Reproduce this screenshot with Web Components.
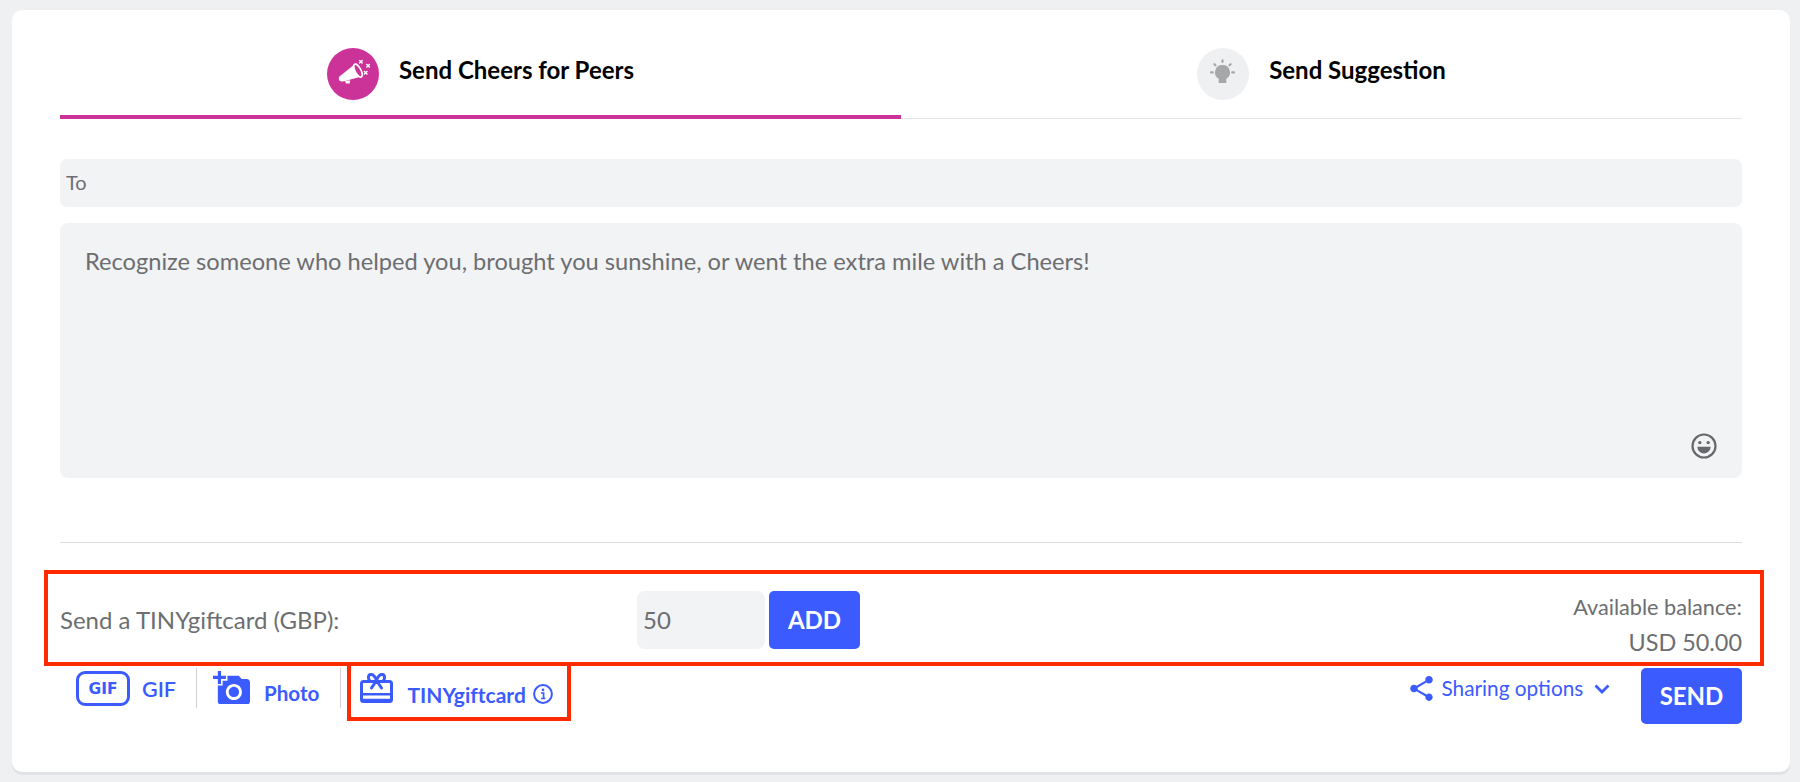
<!DOCTYPE html>
<html><head><meta charset="utf-8"><title>Cheers</title>
<style>
html,body{margin:0;padding:0;height:100%}
body{background:#eff0f2;font-family:Lato,"Liberation Sans",sans-serif;overflow:hidden;font-variant-ligatures:none}
</style></head>
<body>
<cheers-card>
  <cheers-tabs>
    <cheers-tab active label="Send Cheers for Peers">
      <svg slot="icon" width="52" height="52" viewBox="0 0 52 52">
        <g fill="#fff"><path d="M12.4 28.6 27.500 16.500 34.500 28.500 17 33.300q-3.800.6-5-1.400-.6-1.900.4-3.300Z"/>
        <path d="M18 32.500h5.200l-.6 3h-3.800Z"/></g>
        <ellipse cx="31" cy="22.600" rx="2.900" ry="7.200" transform="rotate(-28 31 22.600)" fill="#cc3399" stroke="#fff" stroke-width="1.600"/>
        <g stroke="#fff" stroke-width="1.400" stroke-linecap="round"><path d="M32.600 12.400l2.600 2.600M35.200 12.400l-2.600 2.600M39.800 16.400l2.600 2.600M42.400 16.400l-2.600 2.600M37.400 23.400l2.600 2.600M40 23.400l-2.600 2.600"/></g>
      </svg>
    </cheers-tab>
    <cheers-tab label="Send Suggestion">
      <svg slot="icon" width="52" height="52" viewBox="0 0 52 52">
        <path fill="#a6a7a9" d="M25.500 17a7.400 7.400 0 0 0-3.800 13.800V35h7.600v-4.200A7.400 7.400 0 0 0 25.500 17Z"/>
        <g stroke="#a6a7a9" stroke-width="2.200" stroke-linecap="round"><path d="M25.500 12.400v1.600M14 24.400h1.800M35.200 24.400H37M17.400 16.200l1.100 1.100M33.600 16.200l-1.100 1.100"/></g>
      </svg>
    </cheers-tab>
  </cheers-tabs>
  <cheers-to>To</cheers-to>
  <cheers-message placeholder="Recognize someone who helped you, brought you sunshine, or went the extra mile with a Cheers!"></cheers-message>
  <cheers-gift-row></cheers-gift-row>
  <cheers-toolbar></cheers-toolbar>
</cheers-card>
<script>
const def=(name,css,html)=>{
  customElements.define(name,class extends HTMLElement{
    connectedCallback(){
      if(this.shadowRoot)return;
      const r=this.attachShadow({mode:'open'});
      r.innerHTML='<style>'+css+'</style>'+(typeof html==='function'?html(this):html);
    }
  });
};
const BLUE='#3b5bff',GREY='#6c6e71',FIELD='#f2f3f5';

def('cheers-card',`:host{display:flex;flex-direction:column;box-sizing:border-box;margin:10px 10px 0 12px;height:762px;background:#fff;border-radius:10px;padding:38px 48px 0 48px;box-shadow:0 3px 0 #e1e2e5}`,`<slot></slot>`);

def('cheers-tabs',`:host{display:flex;height:71px;box-sizing:border-box}`,`<slot></slot>`);

def('cheers-tab',`:host{flex:1 1 0;display:flex;justify-content:center;box-sizing:border-box;gap:20px;border-bottom:1px solid #e4e5e8}
:host([active]){border-bottom:4px solid #cc3399}
.c{width:52px;height:52px;border-radius:50%;background:#eff0f2;flex:none}
:host([active]) .c{background:#cc3399}
.l{font:700 24px/44px Lato,sans-serif;color:#000;height:44px}
svg,::slotted(svg){display:block}`,
h=>`<div class="c"><slot name="icon"></slot></div><div class="l">${h.getAttribute('label')}</div>`);

def('cheers-to',`:host{display:block;box-sizing:border-box;margin-top:40px;height:48px;background:${FIELD};border-radius:7px;padding:0 6px;font:400 20px/46px Lato,sans-serif;color:${GREY}}`,`<slot></slot>`);

def('cheers-message',`:host{display:block;position:relative;box-sizing:border-box;margin-top:16px;height:255px;background:${FIELD};border-radius:8px;padding:22px 25px;font:400 23.65px/33px Lato,sans-serif;color:${GREY}}
svg{position:absolute;right:25px;bottom:19px;display:block}`,
h=>`${h.getAttribute('placeholder')}<svg width="26" height="26" viewBox="0 0 26 26"><circle cx="13" cy="13" r="11.500" fill="none" stroke="#68696c" stroke-width="2.200"/><circle cx="8.800" cy="9.600" r="1.700" fill="#68696c"/><circle cx="17.200" cy="9.600" r="1.700" fill="#68696c"/><path d="M6.400 13.800h13.200c0 3.800-3 6.600-6.600 6.600s-6.600-2.800-6.600-6.600Z" fill="#68696c"/></svg>`);

def('cheers-button',`:host{display:flex;align-items:center;justify-content:center;box-sizing:border-box;background:${BLUE};color:#fff;border-radius:5px;font:700 24px/1 Lato,sans-serif}`,`<slot></slot>`);

def('cheers-gift-row',`:host{display:flex;align-items:stretch;box-sizing:border-box;margin:92px -22px 0 -16px;height:96px;border:4px solid #ff2a00;padding:17px 18px 13px 12px;position:relative}
:host::before{content:"";position:absolute;left:12px;right:18px;top:-32px;height:1px;background:#dcdde0}
.l{width:577px;font:400 24px/58px Lato,sans-serif;color:${GREY};flex:none}
.i{width:128px;height:58px;box-sizing:border-box;background:${FIELD};border-radius:8px;padding:0 6px;font:400 24px/58px Lato,sans-serif;color:${GREY};margin-right:4px}
cheers-button{width:91px;height:58px}
.b{margin-left:auto;text-align:right;color:${GREY};margin-top:-2px}
.b div:first-child{font:400 21.7px/36px Lato,sans-serif}
.b div:last-child{font:400 23.4px/34px Lato,sans-serif}`,
`<div class="l">Send a TINYgiftcard (GBP):</div><div class="i">50</div><cheers-button>ADD</cheers-button><div class="b"><div>Available balance:</div><div>USD 50.00</div></div>`);

def('cheers-toolbar',`:host{display:flex;align-items:flex-start;box-sizing:border-box}
.left{display:flex;align-items:flex-start;padding-left:16px}
.t{display:flex;align-items:center;color:${BLUE};font-family:Lato,sans-serif;font-weight:700;font-size:21px;box-sizing:border-box;white-space:nowrap}
svg{display:block;flex:none}
.gif{margin-top:5px;gap:12px;width:120px;height:35px}
.sep{width:1px;height:40px;background:#cfcfd2;margin-top:2px;flex:none}
.gif b{font-weight:600;font-size:21.5px}
.photo{margin-top:5px;padding:0 21px 0 16px;gap:14px;height:33px}
.photo span{margin-top:11px;font-size:20.6px}
.gc{margin:-4px 0 0 6px;border:4px solid #ff2a00;width:224px;height:59px;padding:7px 0 0 9px;align-items:flex-start;gap:14px;font-size:21px}
.gc span{margin-top:9px}
.gc .info{margin:11px 0 0 -7px}
.right{margin-left:auto;display:flex;align-items:flex-start;margin-top:2px}
.share{display:flex;align-items:center;color:${BLUE};font:400 20.8px/1 Lato,sans-serif;margin-top:8px;height:25px;white-space:nowrap}
.share span{margin-left:8px}
.share .ch{margin-left:10.7px}
.right cheers-button{width:101px;height:56px;margin-left:31px}`,
`<div class="left">
  <div class="t gif"><svg width="54" height="35" viewBox="0 0 54 35"><rect x="1.500" y="1.500" width="51" height="32" rx="7.500" fill="none" stroke="${BLUE}" stroke-width="3"/><text x="27" y="23" text-anchor="middle" font-family="DejaVu Sans" font-weight="700" font-size="15.500" fill="${BLUE}">GIF</text></svg><b>GIF</b></div>
  <div class="sep"></div>
  <div class="t photo"><svg width="37" height="33" viewBox="0 1 23 20.500"><path fill="${BLUE}" d="M3 4V1h2v3h3v2H5v3H3V6H0V4h3zm3 6V7h3V4h7l1.830 2H21c1.100 0 2 .9 2 2v12c0 1.100-.9 2-2 2H5c-1.100 0-2-.9-2-2V10h3zm7 9c2.760 0 5-2.240 5-5s-2.240-5-5-5-5 2.240-5 5 2.240 5 5 5zm-3.200-5c0 1.770 1.430 3.200 3.200 3.200s3.200-1.430 3.200-3.200-1.430-3.200-3.200-3.200-3.200 1.430-3.200 3.200z"/></svg><span>Photo</span></div>
  <div class="sep"></div>
  <div class="t gc"><svg width="33" height="30" viewBox="0 0 33 30"><path fill="${BLUE}" d="M3.500 7h26A3.500 3.500 0 0 1 33 10.500V26.500A3.500 3.500 0 0 1 29.500 30h-26A3.500 3.500 0 0 1 0 26.500V10.500A3.500 3.500 0 0 1 3.500 7Zm0 3a.5.5 0 0 0-.5.5V20h27V10.500a.5.5 0 0 0-.5-.5ZM3 22.500v3.200h27v-3.200Z"/><g fill="none" stroke="${BLUE}" stroke-width="3" stroke-linecap="round"><path d="M16.500 7.500C15 3 12.500 1.300 10.500 1.500 8.300 1.800 7.800 5 9.500 7.500M16.500 7.500C18 3 20.500 1.300 22.500 1.500 24.700 1.800 25.200 5 23.500 7.500M16.500 7.500 11.500 15M16.500 7.500 21.500 15"/></g></svg><span>TINYgiftcard</span><svg class="info" width="20" height="20" viewBox="0 0 20 20"><circle cx="10" cy="10" r="8.900" fill="none" stroke="${BLUE}" stroke-width="2"/><circle cx="10" cy="5.900" r="1.300" fill="${BLUE}"/><path d="M8 9h2.600v5M8 14.500h4.400" fill="none" stroke="${BLUE}" stroke-width="1.700"/></svg></div>
</div>
<div class="right">
  <div class="share"><svg width="23" height="25" viewBox="3 2 18 20"><path fill="${BLUE}" d="M18 16.080c-.76 0-1.440.3-1.960.77L8.910 12.700c.05-.23.09-.46.09-.7s-.04-.47-.09-.7l7.050-4.110c.54.5 1.250.81 2.040.81 1.660 0 3-1.340 3-3s-1.340-3-3-3-3 1.340-3 3c0 .24.04.47.09.7L8.040 9.810C7.500 9.310 6.790 9 6 9c-1.660 0-3 1.340-3 3s1.340 3 3 3c.79 0 1.500-.31 2.040-.81l7.120 4.160c-.05.21-.08.43-.08.65 0 1.610 1.310 2.920 2.920 2.920 1.610 0 2.920-1.310 2.920-2.920s-1.310-2.920-2.920-2.920z"/></svg><span>Sharing options</span><svg class="ch" width="16" height="10" viewBox="0 0 16 10"><path d="M1.500 1.500 8 8l6.500-6.500" fill="none" stroke="${BLUE}" stroke-width="2.800"/></svg></div>
  <cheers-button>SEND</cheers-button>
</div>`);
</script>
</body></html>
